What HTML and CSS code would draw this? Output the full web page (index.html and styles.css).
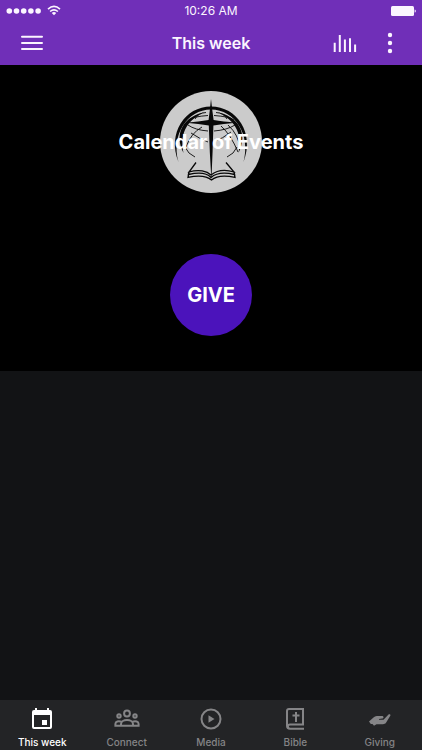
FILE: index.html
```html
<!DOCTYPE html>
<html lang="en">
<head>
<meta charset="utf-8">
<meta name="viewport" content="width=device-width, initial-scale=1">
<title>This week</title>
<link rel="stylesheet" href="styles.css">
</head>
<body>
<header class="header">
  <div class="status">
    <div class="signal">
      <svg width="36" height="8" viewBox="0 0 36 8" fill="currentColor" aria-hidden="true"><circle cx="3.3" cy="4" r="2.8"/><circle cx="10.5" cy="4" r="2.8"/><circle cx="17.7" cy="4" r="2.8"/><circle cx="24.9" cy="4" r="2.8"/><circle cx="32.1" cy="4" r="2.8"/></svg>
      <svg width="14" height="11" viewBox="0 0 14 11" fill="none" stroke="currentColor" stroke-width="1.6" aria-hidden="true"><path d="M1 4.1Q7-1.3 13 4.1M3.1 6.5Q7 3.1 10.9 6.5"/><path d="M4.8 8Q7 6.2 9.2 8L7 10.2z" fill="currentColor" stroke="none"/></svg>
    </div>
    <time class="time">10:26 AM</time>
    <svg class="battery" width="25" height="10" viewBox="0 0 25 10" fill="currentColor" aria-hidden="true"><rect width="23" height="10" rx="1.5"/><path d="M23.6 3.4c1.6.3 1.6 2.9 0 3.2z"/></svg>
  </div>
  <div class="bar">
    <div class="side">
      <button class="icon-button" aria-label="Menu">
        <svg width="24" height="24" viewBox="0 0 24 24" stroke="currentColor" stroke-width="2" stroke-linecap="round" aria-hidden="true"><path d="M2 5.8h20M2 12h20M2 18h20"/></svg>
      </button>
    </div>
    <h1 class="title">This week</h1>
    <div class="side side-end">
      <button class="icon-button" aria-label="Audio">
        <svg width="24" height="24" viewBox="0 0 24 24" stroke="currentColor" stroke-width="2" aria-hidden="true"><path d="M1.7 11.7v9.3M6.8 4v17M11.9 8.500V21M17 7.300V21M22.100 13.500V21"/></svg>
      </button>
      <button class="icon-button" aria-label="More">
        <svg width="24" height="24" viewBox="0 0 24 24" fill="currentColor" aria-hidden="true"><circle cx="12" cy="4" r="2.2"/><circle cx="12" cy="12" r="2.2"/><circle cx="12" cy="20" r="2.2"/></svg>
      </button>
    </div>
  </div>
</header>
<main class="content">
  <a class="tile" href="#events">
    <svg class="emblem" width="102" height="102" viewBox="5 6 102 102" aria-hidden="true">
      <circle cx="56" cy="57" r="51" fill="#cbcbcb"/>
      <g fill="#080808">
        <path d="M23.500 77C12 48 30 21.500 56 21.500S100 48 88.500 77C96 50 80 24.500 56 24.500S16 50 23.500 77z"/>
        <path d="M28.500 68C18 47 30 31 50 27C34 34 24 46 28.500 68z"/>
        <path d="M83.500 68C94 47 82 31 62 27C78 34 88 46 83.500 68z"/>
        <path d="M56 14Q57.300 26 58.600 35Q68 36.500 81 37.700Q68 39 58.400 40.500Q57.800 66 56.400 94.500Q54.500 66 53.800 40.500Q44 39 31 37.700Q44 36.500 53.600 35Q54.800 26 56 14z"/>
      </g>
      <g fill="none" stroke="#080808" stroke-width=".9">
        <path d="M34 35Q38 31.500 53 30.500M59 30.500Q74 31.500 79 35M33 40Q40 45 53 46M59 46Q72 45 80 40"/>
        <path d="M51 27.500Q43 28 40 34M61 27.500Q69 28 72 34"/>
        <path d="M47 42Q36 48 31 62M66 41Q76 50 83 67M73 40Q84 50 85 64"/>
        <path d="M36 48Q45 54 53 57M76 47Q67 54 60 56M30 62Q33 69 40 72M82 62Q79 69 72 72"/>
      </g>
      <g fill="none" stroke="#080808" stroke-width="1.300">
        <path d="M41 77.500L34 87C44 84 52 86 56 90C61 86 69 84 79 87L71 77.500"/>
        <path d="M34 87L33.500 89.500C44 87 52 88 56 92.500C61 88 69 87 79.500 89.500L79 87"/>
        <path d="M33.500 89.500L33 92.300C44 90 52 91 56.500 95C61 91 69 90 80 92.300L79.500 89.500"/>
      </g>
    </svg>
    <span class="caption">Calendar of Events</span>
  </a>
  <div class="tile">
    <button class="give">GIVE</button>
  </div>
</main>
<nav class="tabs" aria-label="Main">
  <a class="tab tab-active" href="#week" aria-current="page">
    <svg width="26" height="24" viewBox="0 0 26 24" fill="currentColor" aria-hidden="true"><path fill-rule="evenodd" d="M6 1h2v2h10V1h2v2h1a2 2 0 0 1 2 2v15a2 2 0 0 1-2 2H5a2 2 0 0 1-2-2V5a2 2 0 0 1 2-2h1zM5 8v12h16V8zM13 13h5v5h-5z"/></svg>
    <span>This week</span>
  </a>
  <a class="tab" href="#connect">
    <svg width="26" height="24" viewBox="0 0 26 24" fill="none" stroke="currentColor" stroke-width="2" aria-hidden="true"><circle cx="13" cy="6.500" r="2.900"/><circle cx="5" cy="9" r="1.700"/><circle cx="21" cy="9" r="1.700"/><path d="M7 19v-2c0-5.200 12-5.200 12 0v2M7.500 14.700C4.500 13.700 1.400 14.400 1.400 17v1.800h23.200V17c0-2.600-3.100-3.300-6.100-2.300"/></svg>
    <span>Connect</span>
  </a>
  <a class="tab" href="#media">
    <svg width="26" height="24" viewBox="0 0 26 24" aria-hidden="true"><circle cx="13" cy="12" r="9.500" fill="none" stroke="currentColor" stroke-width="2"/><path d="M10.500 8.200l6 3.800-6 3.800z" fill="currentColor"/></svg>
    <span>Media</span>
  </a>
  <a class="tab" href="#bible">
    <svg width="26" height="24" viewBox="0 0 26 24" fill="none" stroke="currentColor" stroke-width="2" aria-hidden="true"><path d="M22 21.700H8a3 3 0 0 1-3-3V4a2 2 0 0 1 2-2h14v15.500H8a2.100 2.100 0 0 0 0 4.200M14 5v10M10.500 8.500h7"/></svg>
    <span>Bible</span>
  </a>
  <a class="tab" href="#giving">
    <svg width="26" height="24" viewBox="0 0 26 24" fill="currentColor" aria-hidden="true"><path d="M2 14.500L6.500 10.500C8 9.200 10 8.900 12 9h3c2 0 2.100 2.400.2 2.600l-3.200.4v.7h4.500l4.800-4.900c1-1 2.800-.2 2 .9L19 15.800c-.8 1-1.800 1.400-3 1.400H9.500L7 18.700 5.500 17H3.800z"/></svg>
    <span>Giving</span>
  </a>
</nav>
</body>
</html>
```
FILE: styles.css
```css
* {
  box-sizing: border-box;
}

body {
  margin: 0;
  min-height: 100vh;
  display: flex;
  flex-direction: column;
  background: #121315;
  color: #fff;
  font-family: Inter, "Liberation Sans", sans-serif;
}

svg {
  display: block;
}

button {
  border: 0;
  padding: 0;
  color: inherit;
  font: inherit;
  cursor: pointer;
}

a {
  color: inherit;
  text-decoration: none;
}

.header {
  background: #702fb8;
  color: #fbf5ff;
}

.status,
.bar {
  display: grid;
  grid-template-columns: 1fr auto 1fr;
  align-items: center;
}

.status {
  height: 21px;
  padding: 0 6px;
}

.signal {
  display: flex;
  align-items: center;
  gap: 5px;
}

.time {
  font-size: 12px;
  line-height: 20px;
}

.battery {
  justify-self: end;
}

.bar {
  height: 44px;
  padding: 0 20px;
}

.side {
  display: flex;
  gap: 21px;
}

.side-end {
  justify-content: flex-end;
}

.icon-button {
  background: none;
}

.title {
  margin: 0;
  font-size: 16px;
  line-height: 24px;
  font-weight: 600;
}

.content {
  flex: 1;
}

.tile {
  display: grid;
  place-items: center;
  height: 153px;
  background: #000;
}

.emblem,
.caption {
  grid-area: 1 / 1;
}

.caption {
  font-size: 20px;
  line-height: 28px;
  font-weight: 700;
}

.give {
  width: 82px;
  height: 82px;
  border-radius: 50%;
  background: #4b13bb;
  font-size: 20px;
  font-weight: 700;
}

.tabs {
  display: flex;
  height: 50px;
  background: #232426;
  color: #858587;
}

.tab {
  flex: 1;
  display: flex;
  flex-direction: column;
  align-items: center;
  padding-top: 7px;
  gap: 4px;
  font-size: 10px;
  line-height: 14px;
  font-weight: 500;
}

.tab-active {
  color: #fff;
}
```
